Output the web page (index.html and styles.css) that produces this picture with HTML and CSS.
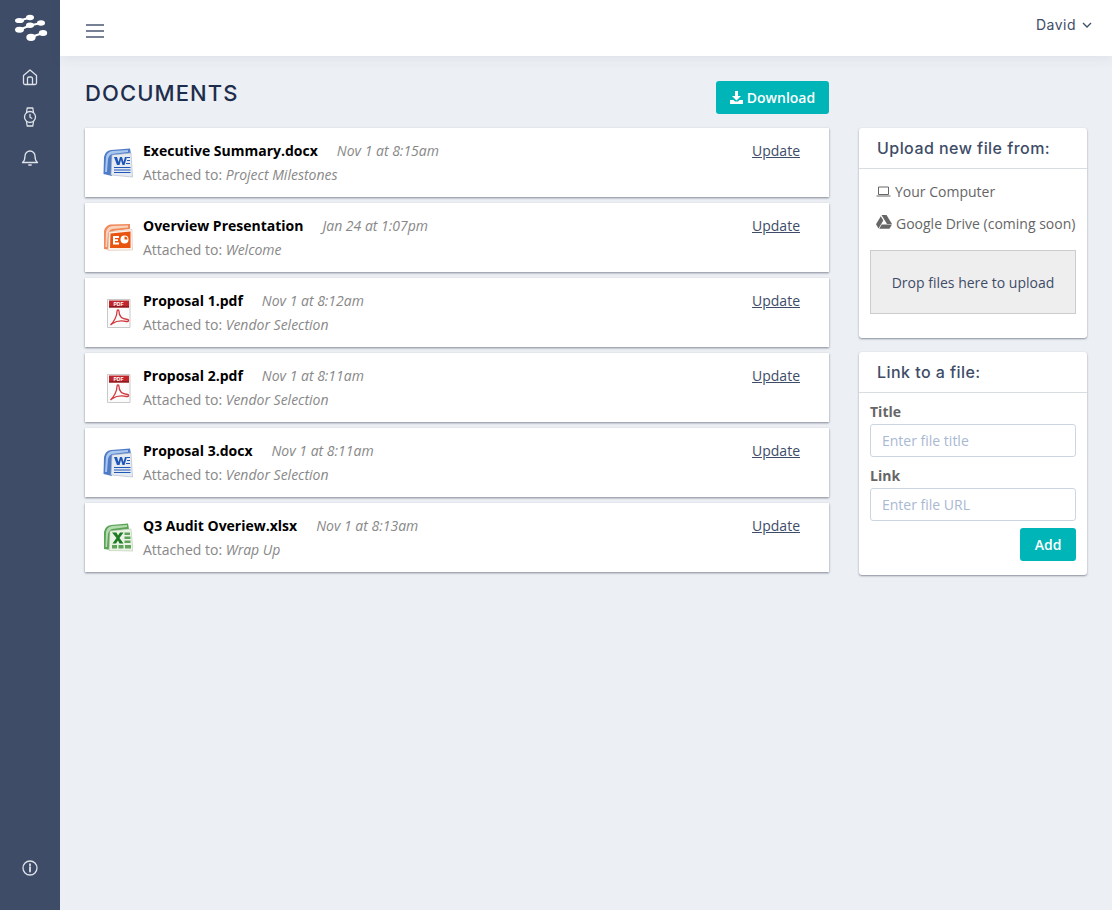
FILE: index.html
```html
<!DOCTYPE html>
<html lang="en">
<head>
    <meta charset="UTF-8">
    <title>Documents</title>
    <link rel="stylesheet" href="styles.css">
</head>
<body>
    <svg class="icon-defs" width="0" height="0">
        <symbol id="file-word" viewBox="0 0 30 30">
            <path d="M1 9 Q2 3 8 2 L27 0.500 L28 6 L10 8 L9 28 L0.500 26 Z" fill="#4f7cc8"/>
            <path d="M3 9 Q4 4 9 3 L25 2 L25 4 L9 6 Q6 7 5 11 L4 24 L2 24 Z" fill="#a9c6ee"/>
            <path d="M9 7 L28 5 L29.500 29 L8 27 Z" fill="#e6ebf2" stroke="#aab4c2" stroke-width=".6"/>
            <path d="M11 9 L14 9 L15.500 14 L17 9 L19 9 L20.500 14 L22 9 L24 9 L21.500 17 L19.500 17 L18 12 L16.500 17 L14 17 Z" fill="#1f57b8"/>
            <path d="M24 9.500 H27 M24 12.500 H27 M23 15.500 H27 M11 19.500 H27.500 M11 22 H27.500 M11 24.500 H27.500" stroke="#1f57b8" stroke-width="1.200"/>
        </symbol>
        <symbol id="file-ppt" viewBox="0 0 30 30">
            <path d="M1 8 Q2 3 7 1.500 L27 1 L27 6 L10 8 L8 27 L1 26 Z" fill="#f08a5c"/>
            <path d="M3 9 Q4 4 9 3 L25 2.500 L25 4.500 L9 6 Q6 7 5 11 L4 24 L2.500 24 Z" fill="#fbd3bc"/>
            <path d="M6 9 L29 6.500 L29.500 27 L5 27.500 Z" fill="#fdf1ea" stroke="#dcc4b6" stroke-width=".6"/>
            <path d="M7.500 10.500 L27.500 8.500 L27.500 25 L7 25 Z" fill="#e8530f"/>
            <path d="M10 13 H16 V15 H12 V16.200 H15 V18 H12 V19.500 H16 V21.500 H10 Z" fill="#fff"/>
            <circle cx="21.500" cy="16.500" r="4" fill="#fff"/>
            <path d="M21.500 16.500 V13.500 A3 3 0 0 1 24.500 16.500 Z" fill="#e8530f"/>
        </symbol>
        <symbol id="file-pdf" viewBox="0 0 30 30">
            <path d="M4.500 1.500 H27 V29.500 H4.500 Z" fill="#fbfbfb" stroke="#c9c9c9"/>
            <path d="M6 2.500 H26 V9.500 H6 Z" fill="#c0252b"/>
            <path d="M6 8 H26 V9.500 H6 Z" fill="#8e1a1e"/>
            <path d="M7.500 27 C11 24 14 18 14 13.500 C14 11.500 16 11.500 16 13.500 C16 18 19 21 24.500 21.500 C26.500 22 25.500 24 23.500 23.500 C19 22.500 14 22.500 9.500 25.500 Z" fill="none" stroke="#d0393f" stroke-width="1.300"/>
        </symbol>
        <symbol id="file-excel" viewBox="0 0 30 30">
            <path d="M1 9 Q2 3 8 2 L25 0.500 L26 6 L10 8 L8 27 L1 26 Z" fill="#5aa357"/>
            <path d="M3 9 Q4 4 9 3 L24 2 L24 4 L9 6 Q6 7 5 11 L4 24 L2.500 24 Z" fill="#b5dcae"/>
            <path d="M7 8 L28 6 L30 28 L6 27.500 Z" fill="#eaf3e5" stroke="#b4c8aa" stroke-width=".6"/>
            <path d="M9 9.500 L13.500 9.500 L15 12.500 L17 9.500 L20.500 9.500 L16.500 15 L20.500 20.500 L16.500 20.500 L15 17.500 L13 20.500 L9.500 20.500 L13.500 15 Z" fill="#1f7a25"/>
            <path d="M21.500 9.500 H27 V12 H21.500 Z M21.500 13.500 H27.500 V16 H21.500 Z M21.500 17.500 H27.500 V20 H21.500 Z M9 22 H14 V25.500 H9 Z M15.500 22 H20.500 V25.500 H15.500 Z M22 22 H28 V25.500 H22 Z" fill="#5fa35a"/>
        </symbol>
    </svg>

    <aside class="sidebar">
        <svg class="logo" width="40" height="30" viewBox="0 0 40 30">
            <g stroke="#fff" stroke-width="2" fill="#fff">
                <path d="M9 6.500 L19 3.500 M9 15.500 L19 11.500 L30 9 M20 23 L32 19" fill="none"/>
                <ellipse cx="8.500" cy="6.500" rx="3.500" ry="1.600"/>
                <ellipse cx="19" cy="3.500" rx="3" ry="1.700"/>
                <ellipse cx="8.500" cy="15.700" rx="3.500" ry="2"/>
                <ellipse cx="19" cy="11.300" rx="3" ry="1.700"/>
                <ellipse cx="30" cy="9" rx="3" ry="1.700"/>
                <ellipse cx="20" cy="23.300" rx="3.700" ry="2.600"/>
                <ellipse cx="32" cy="19" rx="3.200" ry="2"/>
            </g>
        </svg>
        <nav class="side-nav">
            <svg class="side-icon" width="20" height="20" viewBox="0 0 20 20"><path d="M3.500 8.500 L10 3 L16.500 8.500 V16 A1.500 1.500 0 0 1 15 17.500 H5 A1.500 1.500 0 0 1 3.500 16 Z M7.500 17.500 V11.500 A1.500 1.500 0 0 1 9 10 H11 A1.500 1.500 0 0 1 12.500 11.500 V17.500"/></svg>
            <svg class="side-icon" width="20" height="22" viewBox="0 0 20 22"><circle cx="10" cy="11" r="5.500"/><path d="M6.500 6.500 L7.200 2 H12.800 L13.500 6.500 M6.500 15.500 L7.200 20 H12.800 L13.500 15.500 M10 8.500 V11.300 L11.800 12.300"/></svg>
            <svg class="side-icon" width="20" height="20" viewBox="0 0 20 20"><path d="M2.500 15.500 H17.500 C15.500 14 15 12.500 15 9 A5 5 0 0 0 5 9 C5 12.500 4.500 14 2.500 15.500 Z M8.800 18 H11.200"/></svg>
        </nav>
        <svg class="side-icon info-icon" width="20" height="20" viewBox="0 0 20 20"><circle cx="10" cy="10" r="7"/><path d="M10 9.200 V13.500" stroke-width="1.800"/><path d="M10 6.200 V7.400" stroke-width="1.800"/></svg>
    </aside>

    <div class="page">
        <header class="topbar">
            <svg class="menu-icon" width="20" height="16" viewBox="0 0 20 16"><path d="M1 2 H19 M1 8 H19 M1 14 H19"/></svg>
            <div class="user-menu">
                <span>David</span>
                <svg width="10" height="6" viewBox="0 0 10 6"><path d="M1 1 L5 5 L9 1"/></svg>
            </div>
        </header>

        <div class="content">
            <main class="docs">
                <div class="docs-head">
                    <h1>DOCUMENTS</h1>
                    <button class="btn btn-download">
                        <svg width="13" height="13" viewBox="0 0 13 13"><path d="M5 0 H8 V5 H11 L6.500 9.500 L2 5 H5 Z M0 9 H3.500 L5 10.500 H8 L9.500 9 H13 V13 H0 Z"/></svg>
                        Download
                    </button>
                </div>

                <div class="doc-list">
                    <div class="doc">
                        <svg class="doc-icon"><use href="#file-word"/></svg>
                        <div class="doc-info">
                            <p class="doc-title"><b>Executive Summary.docx</b><i>Nov 1 at 8:15am</i></p>
                            <p class="doc-attached">Attached to: <i>Project Milestones</i></p>
                        </div>
                        <a class="doc-update" href="#">Update</a>
                    </div>
                    <div class="doc">
                        <svg class="doc-icon"><use href="#file-ppt"/></svg>
                        <div class="doc-info">
                            <p class="doc-title"><b>Overview Presentation</b><i>Jan 24 at 1:07pm</i></p>
                            <p class="doc-attached">Attached to: <i>Welcome</i></p>
                        </div>
                        <a class="doc-update" href="#">Update</a>
                    </div>
                    <div class="doc">
                        <svg class="doc-icon" viewBox="0 0 30 30"><use href="#file-pdf"/><text class="pdf-label" x="10.500" y="7.800">PDF</text></svg>
                        <div class="doc-info">
                            <p class="doc-title"><b>Proposal 1.pdf</b><i>Nov 1 at 8:12am</i></p>
                            <p class="doc-attached">Attached to: <i>Vendor Selection</i></p>
                        </div>
                        <a class="doc-update" href="#">Update</a>
                    </div>
                    <div class="doc">
                        <svg class="doc-icon" viewBox="0 0 30 30"><use href="#file-pdf"/><text class="pdf-label" x="10.500" y="7.800">PDF</text></svg>
                        <div class="doc-info">
                            <p class="doc-title"><b>Proposal 2.pdf</b><i>Nov 1 at 8:11am</i></p>
                            <p class="doc-attached">Attached to: <i>Vendor Selection</i></p>
                        </div>
                        <a class="doc-update" href="#">Update</a>
                    </div>
                    <div class="doc">
                        <svg class="doc-icon"><use href="#file-word"/></svg>
                        <div class="doc-info">
                            <p class="doc-title"><b>Proposal 3.docx</b><i>Nov 1 at 8:11am</i></p>
                            <p class="doc-attached">Attached to: <i>Vendor Selection</i></p>
                        </div>
                        <a class="doc-update" href="#">Update</a>
                    </div>
                    <div class="doc">
                        <svg class="doc-icon"><use href="#file-excel"/></svg>
                        <div class="doc-info">
                            <p class="doc-title"><b>Q3 Audit Overiew.xlsx</b><i>Nov 1 at 8:13am</i></p>
                            <p class="doc-attached">Attached to: <i>Wrap Up</i></p>
                        </div>
                        <a class="doc-update" href="#">Update</a>
                    </div>
                </div>
            </main>

            <aside class="side-panels">
                <section class="panel panel-upload">
                    <h2>Upload new file from:</h2>
                    <div class="panel-body">
                        <div class="source">
                            <svg width="15" height="11" viewBox="0 0 15 11"><path d="M2.500 1 H12.500 V8.500 H2.500 Z M0.500 10 H14.500"/></svg>
                            Your Computer
                        </div>
                        <div class="source source-drive">
                            <svg width="16" height="14" viewBox="0 0 16 14"><path class="solid" d="M5.500 0 H10.500 L16 9 H11 Z M4.800 1.300 L7.300 5.500 L2.500 13.500 L0 9.300 Z M5.700 9.500 H16 L13.500 13.800 H3.200 Z"/></svg>
                            Google Drive (coming soon)
                        </div>
                        <div class="dropzone">Drop files here to upload</div>
                    </div>
                </section>

                <section class="panel panel-link">
                    <h2>Link to a file:</h2>
                    <div class="panel-body">
                        <label for="file-title">Title</label>
                        <input type="text" id="file-title" placeholder="Enter file title">
                        <label for="file-url">Link</label>
                        <input type="text" id="file-url" placeholder="Enter file URL">
                        <button class="btn btn-add">Add</button>
                    </div>
                </section>
            </aside>
        </div>
    </div>
</body>
</html>
```

FILE: styles.css
```css
* {
    box-sizing: border-box;
}

body {
    margin: 0;
    height: 910px;
    display: flex;
    font-family: 'Open Sans', sans-serif;
    font-size: 14px;
    color: #666;
    background: #eceff4;
    overflow: hidden;
}

.icon-defs {
    position: absolute;
}

.pdf-label {
    font-family: 'Liberation Sans', sans-serif;
    font-size: 5px;
    font-weight: bold;
    fill: #fff;
}

/* Sidebar */
.sidebar {
    width: 60px;
    flex-shrink: 0;
    background: #3e4c68;
    display: flex;
    flex-direction: column;
    align-items: center;
    padding-top: 14px;
    padding-bottom: 32px;
}

.logo {
    display: block;
    margin-left: 2px;
}

.side-nav {
    display: flex;
    flex-direction: column;
    align-items: center;
    gap: 19px;
    margin-top: 23px;
}

.side-icon {
    fill: none;
    stroke: #dfe3e8;
    stroke-width: 1.3;
    stroke-linecap: round;
    stroke-linejoin: round;
}

.info-icon {
    margin-top: auto;
}

/* Top bar */
.page {
    flex: 1;
    min-width: 0;
}

.topbar {
    height: 56px;
    background: #fff;
    box-shadow: 0 2px 12px rgba(62, 76, 104, 0.08);
    display: flex;
    justify-content: space-between;
    padding: 0 20px 0 25px;
}

.menu-icon {
    margin-top: 23px;
    fill: none;
    stroke: #4a5874;
    stroke-width: 1.700;
}

.user-menu {
    display: flex;
    align-items: center;
    gap: 6px;
    height: 49px;
    color: #3e4c68;
    font-family: 'Inter', sans-serif;
    font-size: 14px;
    letter-spacing: 0.5px;
}

.user-menu svg {
    fill: none;
    stroke: #3e4c68;
    stroke-width: 1.3;
    margin-top: 1px;
}

/* Main layout */
.content {
    display: flex;
    gap: 30px;
    padding: 25px 25px 0;
}

.docs {
    width: 744px;
}

.docs-head {
    display: flex;
    justify-content: space-between;
    height: 47px;
}

h1 {
    margin: 0;
    font-family: 'Inter', sans-serif;
    font-weight: 500;
    font-size: 22px;
    line-height: 24px;
    letter-spacing: 1.1px;
    color: #1f2d4d;
}

.btn {
    border: none;
    border-radius: 3px;
    background: #00b5b8;
    color: #fff;
    font-family: 'Open Sans', sans-serif;
    font-weight: 600;
    font-size: 14px;
    height: 33px;
}

.btn-download {
    width: 113px;
    display: flex;
    align-items: center;
    justify-content: center;
    gap: 4px;
}

.btn-download svg {
    fill: #fff;
}

/* Document rows */
.doc-list {
    display: flex;
    flex-direction: column;
    gap: 6px;
}

.doc {
    height: 69px;
    background: #fff;
    box-shadow: 0 1px 2px rgba(40, 50, 70, 0.55);
    display: flex;
    padding: 11px 29px 0 18px;
}

.doc-icon {
    width: 30px;
    height: 30px;
    margin-top: 9px;
    flex-shrink: 0;
}

.doc-info {
    margin-left: 10px;
    flex: 1;
}

.doc-info p {
    margin: 0;
    line-height: 24px;
}

.doc-title b {
    font-weight: 700;
    color: #000;
    margin-right: 19px;
}

.doc-title i {
    color: #888;
}

.doc-attached {
    color: #888;
}

.doc-update {
    color: #3e4c68;
    line-height: 24px;
}

/* Right column */
.side-panels {
    width: 228px;
    display: flex;
    flex-direction: column;
    gap: 14px;
    padding-top: 47px;
}

.panel {
    background: #fff;
    border-radius: 3px;
    box-shadow: 0 1px 2px rgba(40, 50, 70, 0.5);
}

.panel h2 {
    margin: 0;
    height: 41px;
    padding-left: 18px;
    border-bottom: 1px solid #d8dce3;
    font-family: 'Inter', sans-serif;
    font-weight: 500;
    font-size: 16px;
    line-height: 40px;
    letter-spacing: 0.45px;
    color: #3e4c68;
}

.panel-upload {
    height: 210px;
}

.panel-link {
    height: 223px;
}

.panel-body {
    padding: 0 11px;
}

.source {
    display: flex;
    align-items: center;
    gap: 4px;
    height: 32px;
    white-space: nowrap;
}

.source svg {
    margin-left: 6px;
    fill: none;
    stroke: #666;
    stroke-width: 1;
}

.source-drive svg {
    margin-top: -3px;
}

.source svg .solid {
    fill: #666;
    stroke: none;
}

.panel-upload .panel-body {
    padding-top: 6px;
}

.dropzone {
    height: 64px;
    margin-top: 11px;
    background: #eee;
    border: 1px solid #ccc;
    color: #3e4c68;
    display: flex;
    align-items: center;
    justify-content: center;
}

label {
    display: block;
    font-weight: 700;
    line-height: 19px;
    color: #666;
}

.panel-link .panel-body {
    display: flex;
    flex-direction: column;
    padding-top: 9px;
}

input {
    width: 206px;
    height: 33px;
    margin: 3px 0 9px;
    padding: 0 11px;
    border: 1px solid #cdd5e3;
    border-radius: 3px;
    font-family: 'Open Sans', sans-serif;
    font-size: 14px;
}

input::placeholder {
    color: #a9b8d3;
    opacity: 1;
}

.btn-add {
    width: 56px;
    align-self: flex-end;
    margin-top: -2px;
}
```
